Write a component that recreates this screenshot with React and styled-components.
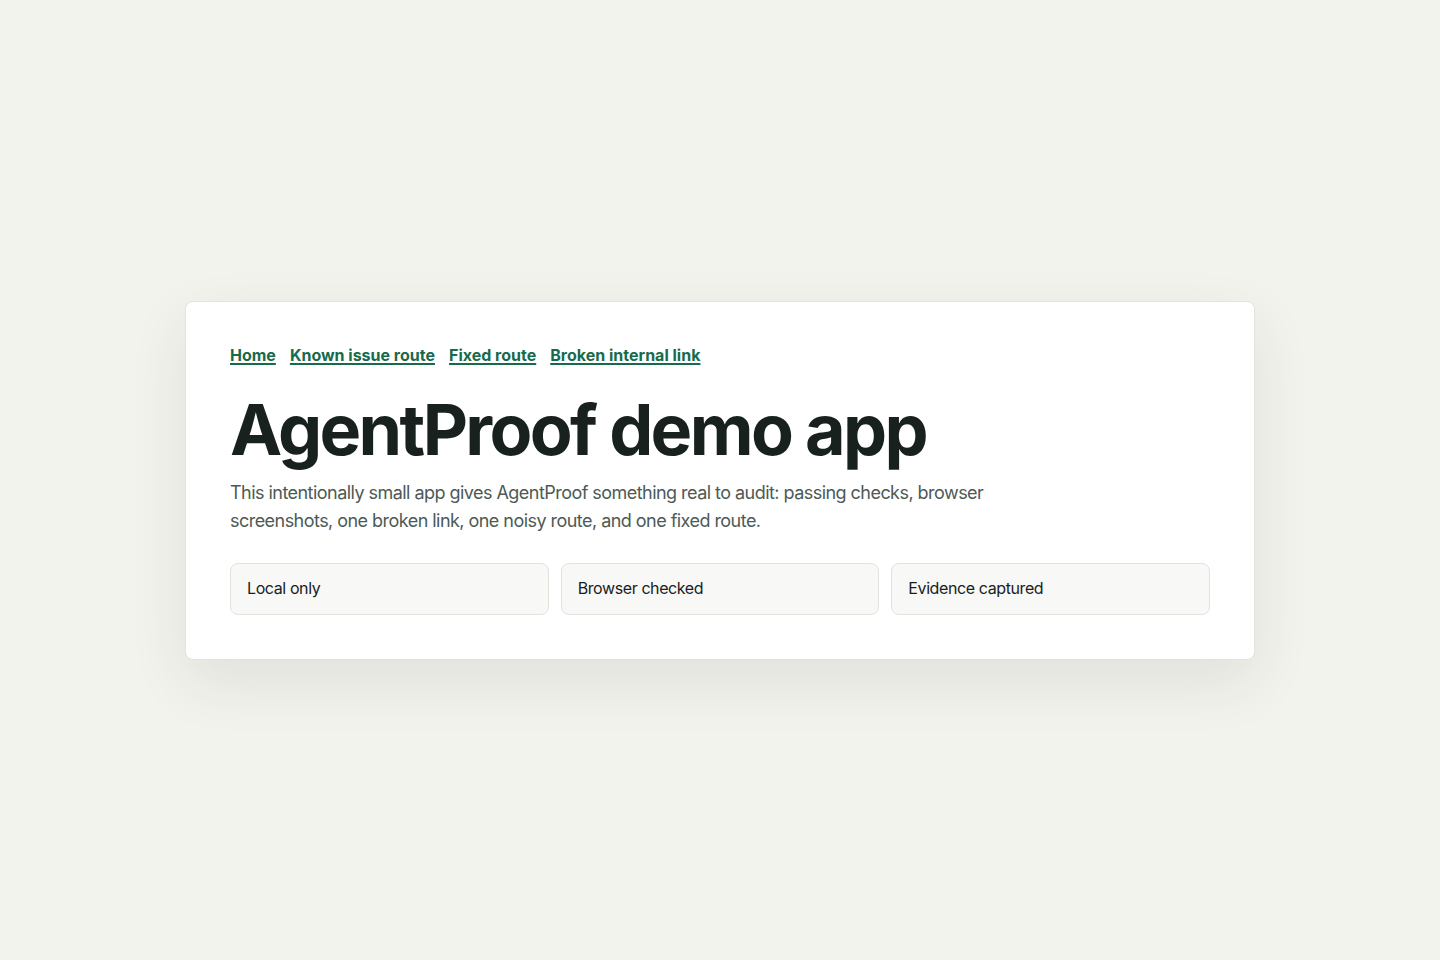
import React from 'react'
import styled, { createGlobalStyle } from 'styled-components'

const GlobalStyle = createGlobalStyle`
  * { box-sizing: border-box; }
  body {
    margin: 0;
    background: #f3f3ee;
    font-family: Inter, "Noto Sans", sans-serif;
    color: #18211e;
  }
`

const Page = styled.main`
  min-height: 100vh;
  display: grid;
  place-items: center;
  padding: 24px;
`

const Card = styled.section`
  width: 1070px;
  background: #ffffff;
  border: 1px solid #e2e3de;
  border-radius: 8px;
  padding: 44px;
  box-shadow: 0 22px 60px rgba(40, 45, 30, 0.09);
`

const Nav = styled.nav`
  display: flex;
  gap: 14px;
  line-height: 19px;
  a {
    color: #176b4c;
    font-size: 16px;
    font-weight: 700;
    text-decoration: underline;
    text-underline-offset: 2px;
    text-decoration-thickness: 1.5px;
  }
`

const Title = styled.h1`
  margin: 30px 0 0;
  font-size: 70px;
  line-height: 1;
  font-weight: 700;
  letter-spacing: -0.038em;
  color: #18211e;
`

const Lead = styled.p`
  margin: 14px 0 0;
  max-width: 780px;
  font-size: 18px;
  line-height: 28px;
  letter-spacing: -0.03em;
  color: #4d5a55;
`

const Stats = styled.div`
  margin-top: 28px;
  display: grid;
  grid-template-columns: repeat(3, 1fr);
  gap: 12px;
`

const Stat = styled.div`
  background: #f8f8f6;
  border: 1px solid #e2e3de;
  border-radius: 8px;
  padding: 15px 16px 16px;
  font-size: 16px;
  line-height: 19px;
  letter-spacing: -0.025em;
  color: #18211e;
`

const App = () => {
  return (
    <>
      <GlobalStyle />
      <Page>
        <Card>
          <Nav>
            <a href="#/">Home</a>
            <a href="#/known-issue">Known issue route</a>
            <a href="#/fixed">Fixed route</a>
            <a href="#/missing">Broken internal link</a>
          </Nav>
          <Title>AgentProof demo app</Title>
          <Lead>
            This intentionally small app gives AgentProof something real to audit: passing checks, browser
            screenshots, one broken link, one noisy route, and one fixed route.
          </Lead>
          <Stats>
            <Stat>Local only</Stat>
            <Stat>Browser checked</Stat>
            <Stat>Evidence captured</Stat>
          </Stats>
        </Card>
      </Page>
    </>
  )
}

export default App
